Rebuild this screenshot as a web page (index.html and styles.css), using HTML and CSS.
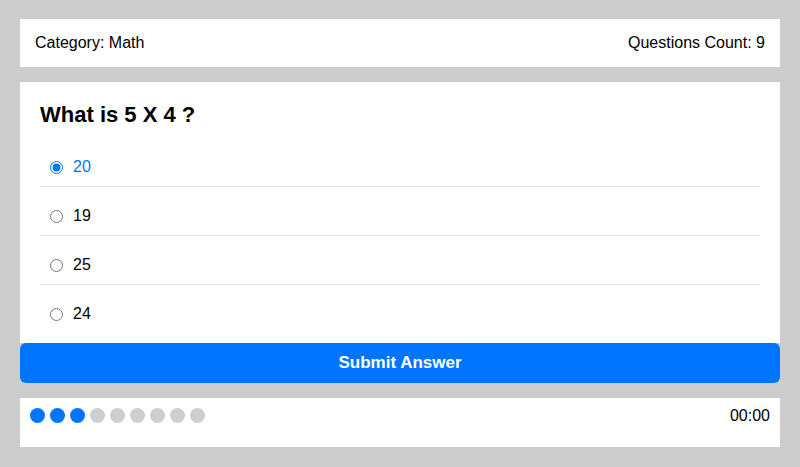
FILE: index.html
```html
<!DOCTYPE html>
<html lang="en">
<head>
<meta charset="utf-8">
<title>Quiz App</title>
<link rel="stylesheet" href="styles.css">
</head>
<body>
<div class="quiz-app">
  <div class="quiz-info">
    <div class="category">Category: <span>Math</span></div>
    <div class="count">Questions Count: <span>9</span></div>
  </div>
  <div class="quiz-area">
    <h2 class="question">What is 5 X 4 ?</h2>
    <div class="answers">
      <label class="answer checked"><input type="radio" name="q" checked><span>20</span></label>
      <label class="answer"><input type="radio" name="q"><span>19</span></label>
      <label class="answer"><input type="radio" name="q"><span>25</span></label>
      <label class="answer"><input type="radio" name="q"><span>24</span></label>
    </div>
  </div>
  <button class="submit-button">Submit Answer</button>
  <div class="bullets">
    <div class="spans">
      <span class="on"></span><span class="on"></span><span class="on"></span><span></span><span></span><span></span><span></span><span></span><span></span>
    </div>
    <div class="countdown">00:00</div>
  </div>
</div>
</body>
</html>
```
FILE: styles.css
```css
* { box-sizing: border-box; }
html, body { margin: 0; padding: 0; }
body {
  background: #cccccc;
  font-family: "Liberation Sans", Arial, sans-serif;
  font-size: 16px;
  color: #000;
}
.quiz-app {
  margin: 19px 20px 20px;
}
.quiz-info {
  display: flex;
  justify-content: space-between;
  background: #fff;
  padding: 15px;
  line-height: 18px;
}
.quiz-area {
  background: #fff;
  margin-top: 15px;
  padding: 20px 20px 10px;
}
.question {
  margin: 0 0 11px;
  font-size: 22px;
  line-height: 25px;
  font-weight: bold;
}
.answers { display: flex; flex-direction: column; }
.answer {
  display: flex;
  align-items: center;
  padding: 20px 10px 10px;
  line-height: 18px;
  border-bottom: 1px solid #dfdfdf;
  cursor: pointer;
}
.answer:last-child { border-bottom: none; }
.answer input {
  margin: 0 10px 0 0;
  width: 13px;
  height: 13px;
}
.answer.checked { color: #0075ff; }
.submit-button {
  display: block;
  width: 100%;
  height: 40px;
  border: none;
  border-radius: 6px;
  background: #0075ff;
  color: #fff;
  font-family: "Liberation Sans", Arial, sans-serif;
  font-size: 17px;
  font-weight: bold;
  cursor: pointer;
}
.bullets {
  display: flex;
  justify-content: space-between;
  align-items: flex-start;
  background: #fff;
  margin-top: 15px;
  padding: 10px;
  height: 49px;
}
.spans { display: flex; }
.spans span {
  width: 15px;
  height: 15px;
  border-radius: 50%;
  background: #cfcfcf;
  margin-right: 5px;
}
.spans span.on { background: #0075ff; }
.countdown {
  line-height: 18px;
  margin-top: -1px;
}
```
